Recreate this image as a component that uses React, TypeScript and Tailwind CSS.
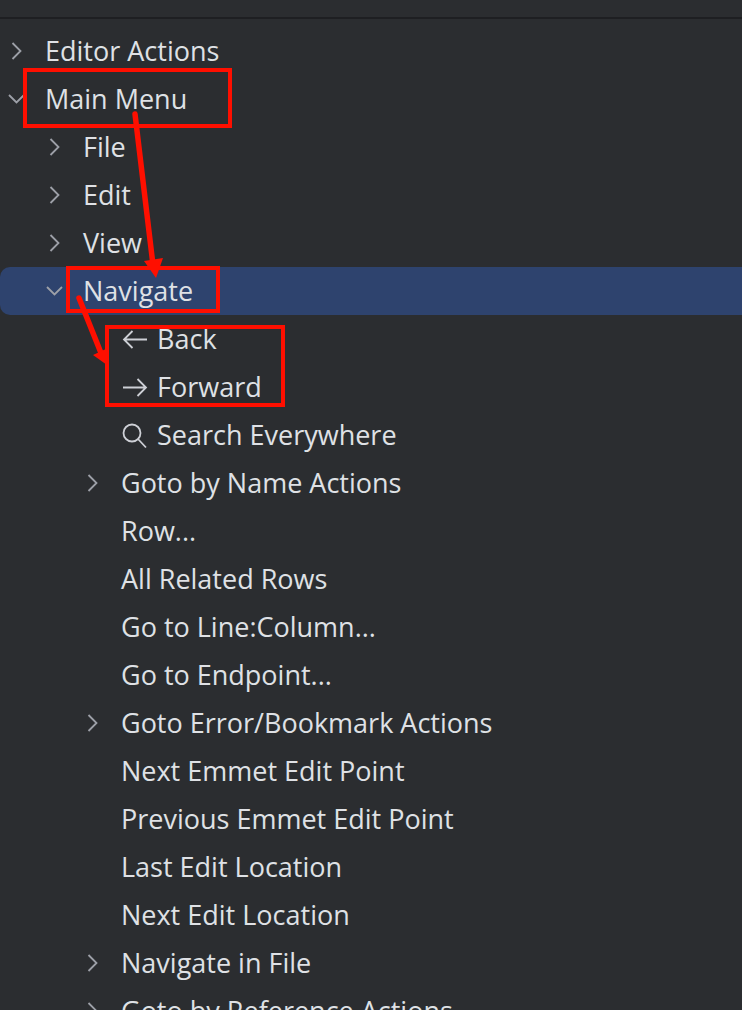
const rows = [
  { label: 'Editor Actions', depth: 0, arrow: 'right' },
  { label: 'Main Menu', depth: 0, arrow: 'down' },
  { label: 'File', depth: 1, arrow: 'right' },
  { label: 'Edit', depth: 1, arrow: 'right' },
  { label: 'View', depth: 1, arrow: 'right' },
  { label: 'Navigate', depth: 1, arrow: 'down', selected: true },
  { label: 'Back', depth: 2, icon: 'back' },
  { label: 'Forward', depth: 2, icon: 'forward' },
  { label: 'Search Everywhere', depth: 2, icon: 'search' },
  { label: 'Goto by Name Actions', depth: 2, arrow: 'right' },
  { label: 'Row...', depth: 2 },
  { label: 'All Related Rows', depth: 2 },
  { label: 'Go to Line:Column...', depth: 2 },
  { label: 'Go to Endpoint...', depth: 2 },
  { label: 'Goto Error/Bookmark Actions', depth: 2, arrow: 'right' },
  { label: 'Next Emmet Edit Point', depth: 2 },
  { label: 'Previous Emmet Edit Point', depth: 2 },
  { label: 'Last Edit Location', depth: 2 },
  { label: 'Next Edit Location', depth: 2 },
  { label: 'Navigate in File', depth: 2, arrow: 'right' },
  { label: 'Goto by Reference Actions', depth: 2, arrow: 'right' },
]

const indent = ['pl-[7px]', 'pl-[45px]', 'pl-[83px]']

function Arrow({ dir }: { dir?: string }) {
  return (
    <span className="w-[38px] shrink-0 flex items-center">
      {dir === 'right' && (
        <svg width="18" height="18" viewBox="0 0 18 18" fill="none" stroke="#9da0a8" strokeWidth="1.8">
          <path d="M5.5 1 L13.5 9 L5.5 17" />
        </svg>
      )}
      {dir === 'down' && (
        <svg width="18" height="18" viewBox="0 0 18 18" fill="none" stroke="#9da0a8" strokeWidth="1.8">
          <path d="M2 5 L9.5 12.5 L17 5" />
        </svg>
      )}
    </span>
  )
}

function ItemIcon({ name }: { name: string }) {
  return (
    <span className="w-[36px] shrink-0 flex items-center">
      <svg width="27" height="27" viewBox="0 0 27 27" fill="none" stroke="#ced0d6" strokeWidth="1.8">
        {name === 'back' && <path d="M26 13.5 H3 M11.5 5 L3 13.5 L11.5 22" />}
        {name === 'forward' && <path d="M2 13.5 H25 M16.5 5 L25 13.5 L16.5 22" />}
        {name === 'search' && (
          <>
            <circle cx="11" cy="11" r="8.5" />
            <path d="M17 17 L25 25.5" />
          </>
        )}
      </svg>
    </span>
  )
}

export default function App() {
  return (
    <div className="relative w-[742px] h-[1010px] overflow-hidden bg-[#2b2d30] text-[#dfe1e5] text-[27px] font-['Open_Sans','Noto_Sans',sans-serif]">
      <div className="h-[17px]" />
      <div className="h-[2px] bg-[#1e1f22]" />
      <div className="h-[8px]" />

      {rows.map((r) => (
        <div
          key={r.label}
          className={`h-12 flex items-center whitespace-nowrap ${indent[r.depth]} ${r.selected ? 'bg-[#2e436e] rounded-l-[10px]' : ''}`}
        >
          {r.icon ? <span className="w-[38px] shrink-0" /> : <Arrow dir={r.arrow} />}
          {r.icon ? <ItemIcon name={r.icon} /> : null}
          <span>{r.label}</span>
        </div>
      ))}

      {/* annotations drawn over the tree */}
      <div className="absolute left-[23px] top-[68px] w-[209px] h-[60px] border-4 border-[#ff0f00]" />
      <div className="absolute left-[66px] top-[266px] w-[154px] h-[47px] border-4 border-[#ff0f00]" />
      <div className="absolute left-[105px] top-[325px] w-[180px] h-[82px] border-4 border-[#ff0f00]" />
      <svg className="absolute left-0 top-0" width="742" height="1010" fill="none">
        <path d="M135 114 L153 265" stroke="#ff0f00" strokeWidth="5.5" strokeLinecap="round" />
        <path d="M144 261 L163 258 L156 278 Z" fill="#ff0f00" />
        <path d="M79 298 L103 358" stroke="#ff0f00" strokeWidth="5.5" strokeLinecap="round" />
        <path d="M93 355 L108 348 L107 365 Z" fill="#ff0f00" />
      </svg>
    </div>
  )
}
